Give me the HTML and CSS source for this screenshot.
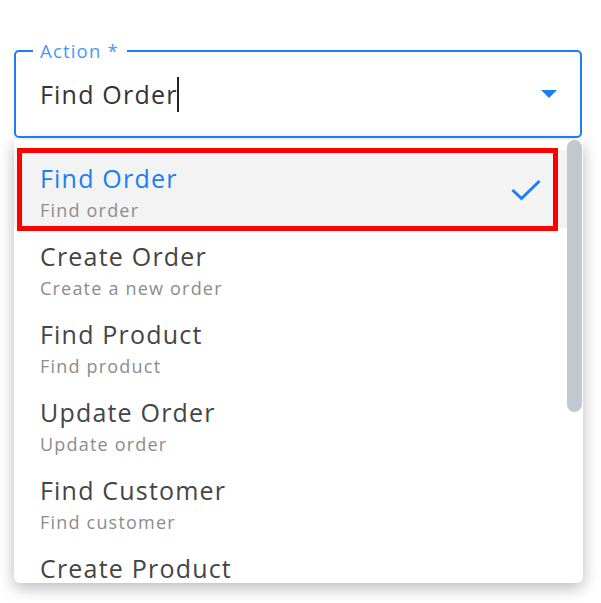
FILE: index.html
```html
<!DOCTYPE html>
<html>
<head>
<meta charset="utf-8">
<link rel="stylesheet" href="styles.css">
</head>
<body>
<div class="page">
  <div class="field">
    <span class="field-label">Action *</span>
    <div class="field-value"><span class="value-text">Find Order</span><span class="caret"></span></div>
    <span class="arrow"></span>
  </div>
  <div class="dropdown">
    <ul class="options">
      <li class="option selected">
        <div class="option-text">
          <div class="option-title">Find Order</div>
          <div class="option-sub">Find order</div>
        </div>
        <svg class="check" width="30" height="22" viewBox="0 0 30 22"><polyline points="1.5,11 10.5,19.5 28.5,2" fill="none" stroke="#1a7ff5" stroke-width="3"/></svg>
        <span class="highlight-box"></span>
      </li>
      <li class="option">
        <div class="option-text">
          <div class="option-title">Create Order</div>
          <div class="option-sub">Create a new order</div>
        </div>
      </li>
      <li class="option">
        <div class="option-text">
          <div class="option-title">Find Product</div>
          <div class="option-sub">Find product</div>
        </div>
      </li>
      <li class="option">
        <div class="option-text">
          <div class="option-title">Update Order</div>
          <div class="option-sub">Update order</div>
        </div>
      </li>
      <li class="option">
        <div class="option-text">
          <div class="option-title">Find Customer</div>
          <div class="option-sub">Find customer</div>
        </div>
      </li>
      <li class="option last">
        <div class="option-text">
          <div class="option-title">Create Product</div>
        </div>
      </li>
    </ul>
    <div class="scrollbar"><div class="thumb"></div></div>
  </div>
</div>
</body>
</html>
```
FILE: styles.css
```css
* { box-sizing: border-box; }
html, body { margin: 0; padding: 0; background: #ffffff; }
body {
  font-family: "Open Sans", "Noto Sans", sans-serif;
  letter-spacing: 0.075em;
}
.page {
  padding: 50px 0 0 14px;
  width: 601px;
  height: 603px;
  overflow: hidden;
}
.field {
  position: relative;
  width: 568px;
  height: 88px;
  border: 2px solid #1a7ff7;
  border-radius: 5px;
  padding: 26px 0 26px 24px;
  display: flex;
  align-items: center;
}
.field-label {
  position: absolute;
  left: 17px;
  top: -13px;
  padding: 0 8px 0 7px;
  background: #ffffff;
  font-size: 18.5px;
  line-height: 24px;
  color: #4a97f7;
}
.field-value {
  font-size: 25px;
  line-height: 32px;
  color: #333333;
  flex: 1;
}
.caret {
  display: inline-block;
  width: 2px;
  height: 35px;
  background: #222222;
  vertical-align: -8px;
  margin-left: -1px;
}
.arrow {
  width: 0;
  height: 0;
  border-left: 8px solid transparent;
  border-right: 8px solid transparent;
  border-top: 8px solid #1a7ff7;
  margin-right: 23px;
}
.dropdown {
  margin-top: 2px;
  width: 569px;
  height: 443px;
  background: #ffffff;
  border-radius: 0 0 6px 6px;
  box-shadow: 0 5px 16px rgba(0, 0, 0, 0.28);
  overflow: hidden;
  display: grid;
  grid-template-columns: 553px 16px;
}
.options {
  list-style: none;
  margin: 0;
  padding: 10px 0 0 0;
}
.option {
  position: relative;
  height: 78px;
  padding: 12px 26px 6px 26px;
  display: flex;
  align-items: center;
  justify-content: space-between;
}
.option.last {
  align-items: flex-start;
}
.option-text { display: flex; flex-direction: column; }
.option-title {
  font-size: 25px;
  line-height: 32px;
  color: #454545;
  white-space: nowrap;
}
.option-sub {
  margin-top: 4px;
  font-size: 18px;
  line-height: 24px;
  color: #8c8c8c;
  white-space: nowrap;
}
.selected { background: #f3f3f3; }
.selected .option-title { color: #1a7ff5; }
.check { margin-top: -4px; }
.highlight-box {
  position: absolute;
  left: 3px;
  top: -2px;
  width: 541px;
  height: 83px;
  border: 5px solid #ff0000;
}
.scrollbar { padding: 0 1px 0 0; }
.thumb {
  width: 15px;
  height: 272px;
  border-radius: 8px;
  background: #c2c8d0;
}
```
